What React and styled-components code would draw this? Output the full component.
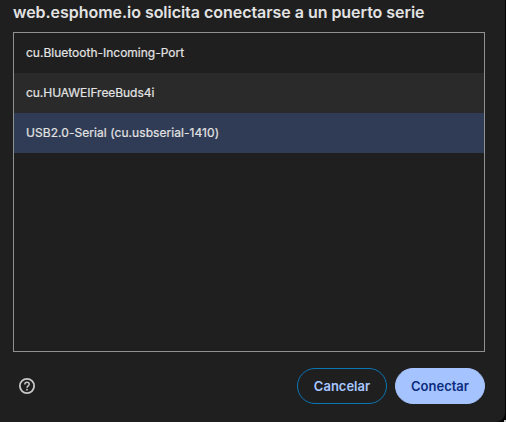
import React from "react";
import styled, { createGlobalStyle } from "styled-components";

const Global = createGlobalStyle`
  * { box-sizing: border-box; }
  body { margin: 0; background: #050505; overflow: hidden; }
`;
const Dialog = styled.main`
  width: 505px; height: 422px; padding: 0 20px 18px 13px;
  display: flex; flex-direction: column; border-bottom-right-radius: 9px;
  background: #1f1f1f; color: #e3e3e3; font-family: Inter, sans-serif;
`;
const CornerMark = styled.i`
  position: absolute; left: 504px; top: 420px; width: 2px; height: 2px; background: #c9c9c9;
`;
const Title = styled.h1`
  margin: 0; height: 32px; font-size: 16px; font-weight: 600; line-height: 25px;
  letter-spacing: -0.035px; white-space: nowrap;
`;
const PortList = styled.ul`
  margin: 0; padding: 0; list-style: none; height: 320px; border: 1px solid #8e918f;
`;
const Port = styled.li`
  height: 40px; padding: 0 12px 2px; display: flex; align-items: center; font-size: 12px;
  letter-spacing: ${(p) => p.$spacing || "0"};
  -webkit-text-stroke: 0.2px currentColor;
  background: ${(p) => p.$bg};
`;
const Footer = styled.footer`
  margin-top: 16px; height: 36px; display: flex; align-items: center; gap: 8px;
`;
const Help = styled.svg`
  width: 16px; height: 16px; margin-left: 6px; margin-right: auto;
`;
const Button = styled.button`
  width: 90px; height: 36px; padding: 0; border-radius: 18px; font: 600 13px Inter, sans-serif;
  border: 1px solid ${(p) => (p.$primary ? "#a5c4ff" : "#0b76b5")};
  background: ${(p) => (p.$primary ? "#a5c4ff" : "transparent")};
  color: ${(p) => (p.$primary ? "#0b2c80" : "#a8c7ff")};
`;

export default function App() {
  return (
    <>
      <Global />
      <Dialog>
        <Title>web.esphome.io solicita conectarse a un puerto serie</Title>
        <PortList>
          <Port $bg="#1f1f1f">cu.Bluetooth-Incoming-Port</Port>
          <Port $bg="#2a2a2a" $spacing="-0.05px">cu.HUAWEIFreeBuds4i</Port>
          <Port $bg="#303c55" $spacing="0.06px">USB2.0-Serial (cu.usbserial-1410)</Port>
        </PortList>
        <Footer>
          <Help viewBox="0 0 16 16" fill="none" stroke="#c7c7c7">
            <circle cx="8" cy="8" r="7.1" strokeWidth="1.8" />
            <path d="M5.8 6.5C5.8 5.2 6.7 4.3 8 4.3s2.2.8 2.2 2c0 1.5-2.2 1.7-2.2 3.4" strokeWidth="1.5" />
            <circle cx="8" cy="11.7" r=".9" fill="#c7c7c7" stroke="none" />
          </Help>
          <Button>Cancelar</Button>
          <Button $primary>Conectar</Button>
        </Footer>
      </Dialog>
      <CornerMark />
    </>
  );
}
